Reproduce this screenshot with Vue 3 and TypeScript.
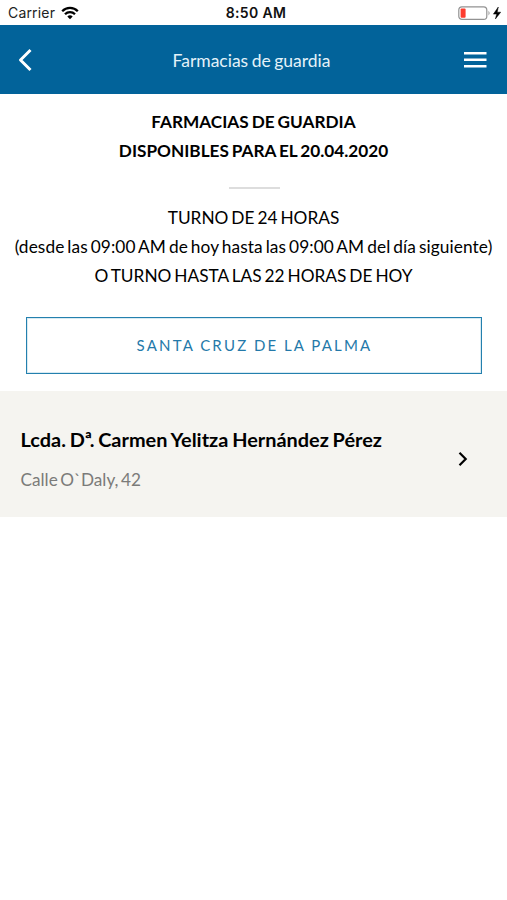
<script setup lang="ts">
interface Pharmacy { title: string; name: string; address: string }
const shiftLines: string[] = [
  'TURNO DE 24 HORAS',
  '(desde las 09:00 AM de hoy hasta las 09:00 AM del día siguiente)',
  'O TURNO HASTA LAS 22 HORAS DE HOY',
]
const pharmacies: Pharmacy[] = [
  { title: 'Lcda. D', name: 'Carmen Yelitza Hernández Pérez', address: 'Calle O`Daly, 42' },
]
</script>

<template>
  <div class="screen">
    <div class="status">
      <div class="carrier">
        <span>Carrier</span>
        <svg width="18" height="14" viewBox="0 0 18 14" fill="none" stroke="#000" stroke-width="2.3">
          <path d="M1.2 5.2a11 11 0 0 1 15.6 0M4 8.300a7 7 0 0 1 10 0" />
          <path d="M9 13.2L6.300 10.500a3.900 3.900 0 0 1 5.400 0z" fill="#000" stroke="none" />
        </svg>
      </div>
      <span class="clock">8:50 AM</span>
      <svg class="battery" width="44" height="16" viewBox="0 0 44 16">
        <rect x=".8" y="1.800" width="28" height="12.600" rx="3.2" fill="none" stroke="#929292" stroke-width="1.2" />
        <rect x="2.6" y="3.5" width="5" height="9.200" rx="1" fill="#fc3c2f" />
        <path d="M30.5 5.700q2.200 2.400 0 4.800z" fill="#929292" />
        <path d="M40.300 2L35.400 9.100h3.300l-1.300 4.900L42.700 7.200H39.200z" fill="#000" stroke="#000" stroke-width=".5" />
      </svg>
    </div>
    <header class="bar">
      <svg width="16" height="24" viewBox="0 0 16 24" fill="none" stroke="#fff" stroke-width="3"><path d="M13.500 2L3.500 12l10 10" stroke-linejoin="round" /></svg>
      <h1>Farmacias de guardia</h1>
      <svg width="24" height="18" viewBox="0 0 24 18" fill="#fff"><path d="M1 1h22.500v2.500H1zM1 7.500h22.500V10H1zM1 14h22.500v2.500H1z" /></svg>
    </header>
    <main>
      <section class="intro">
        <h2>FARMACIAS DE GUARDIA<br />DISPONIBLES PARA EL 20.04.2020</h2>
        <div class="divider"></div>
        <p v-for="line in shiftLines" :key="line">{{ line }}</p>
      </section>
      <button class="town" type="button">SANTA CRUZ DE LA PALMA</button>
      <article v-for="item in pharmacies" :key="item.name" class="pharmacy">
        <div>
          <h3>{{ item.title }}<span class="ordinal">ª</span>. {{ item.name }}</h3>
          <address>{{ item.address }}</address>
        </div>
        <svg width="10" height="16" viewBox="0 0 10 16" fill="none" stroke="#000" stroke-width="2.2"><path d="M1.500 1.800L7.700 8l-6.200 6.200" /></svg>
      </article>
    </main>
  </div>
</template>

<style>
body { background: #fff; }
</style>

<style scoped>
.screen { width: 100%; min-height: 900px; background: #fff; color: #000; font-family: Lato, sans-serif; }
h1, h2, h3, p { margin: 0; }
svg { display: block; flex: none; }
.status { height: 25.300px; display: grid; grid-template-columns: 1fr auto 1fr; align-items: center; padding: 0 5px 0 8px; box-sizing: border-box; font: 14px/25px Inter, sans-serif; }
.carrier { display: flex; align-items: center; gap: 6px; color: #222; letter-spacing: .18px; }
.clock { padding: 0 0 0 2px; color: #111; font-weight: 600; letter-spacing: .35px; }
.battery { justify-self: end; }
.bar { height: 68.700px; box-sizing: border-box; display: flex; align-items: center; justify-content: space-between; padding: 0 20px 0 17px; background: #02639a; color: #fff; }
.bar h1 { padding: 2px 0 0 7px; color: #e4f2f9; font-size: 17.500px; font-weight: 400; word-spacing: -1px; }
.intro { padding-top: 13px; text-align: center; font-size: 17.300px; line-height: 29.300px; white-space: nowrap; word-spacing: -1.500px; }
.intro h2 { font-size: 17.200px; font-weight: 700; line-height: 29.300px; word-spacing: -1.200px; }
.intro p:nth-of-type(2) { letter-spacing: .08px; }
.divider { width: 51px; height: 2px; background: #ddd; margin: 21px auto 14px; position: relative; left: .5px; }
.town { display: block; width: 456px; height: 57px; margin: 27px auto 17px; padding: 0 0 2px; border: 1px solid #2480ae; box-shadow: inset 0 0 0 1px #d8eaf2; background: #fff; color: #2479a9; font: 15px Lato, sans-serif; letter-spacing: 2.200px; word-spacing: -.5px; text-indent: 2px; }
.pharmacy { height: 126px; box-sizing: border-box; display: flex; align-items: center; justify-content: space-between; padding: 11px 39px 0 20.500px; background: #f5f4f0; }
.pharmacy svg { margin-bottom: 2px; }
.pharmacy h3 { margin-top: -1px; font-size: 19.900px; line-height: 28px; font-weight: 700; word-spacing: -1px; }
.ordinal { letter-spacing: -2.500px; }
.pharmacy address { margin-top: 14px; font-size: 17.200px; line-height: 26px; font-style: normal; color: #7b7b79; word-spacing: -1.800px; }
</style>
